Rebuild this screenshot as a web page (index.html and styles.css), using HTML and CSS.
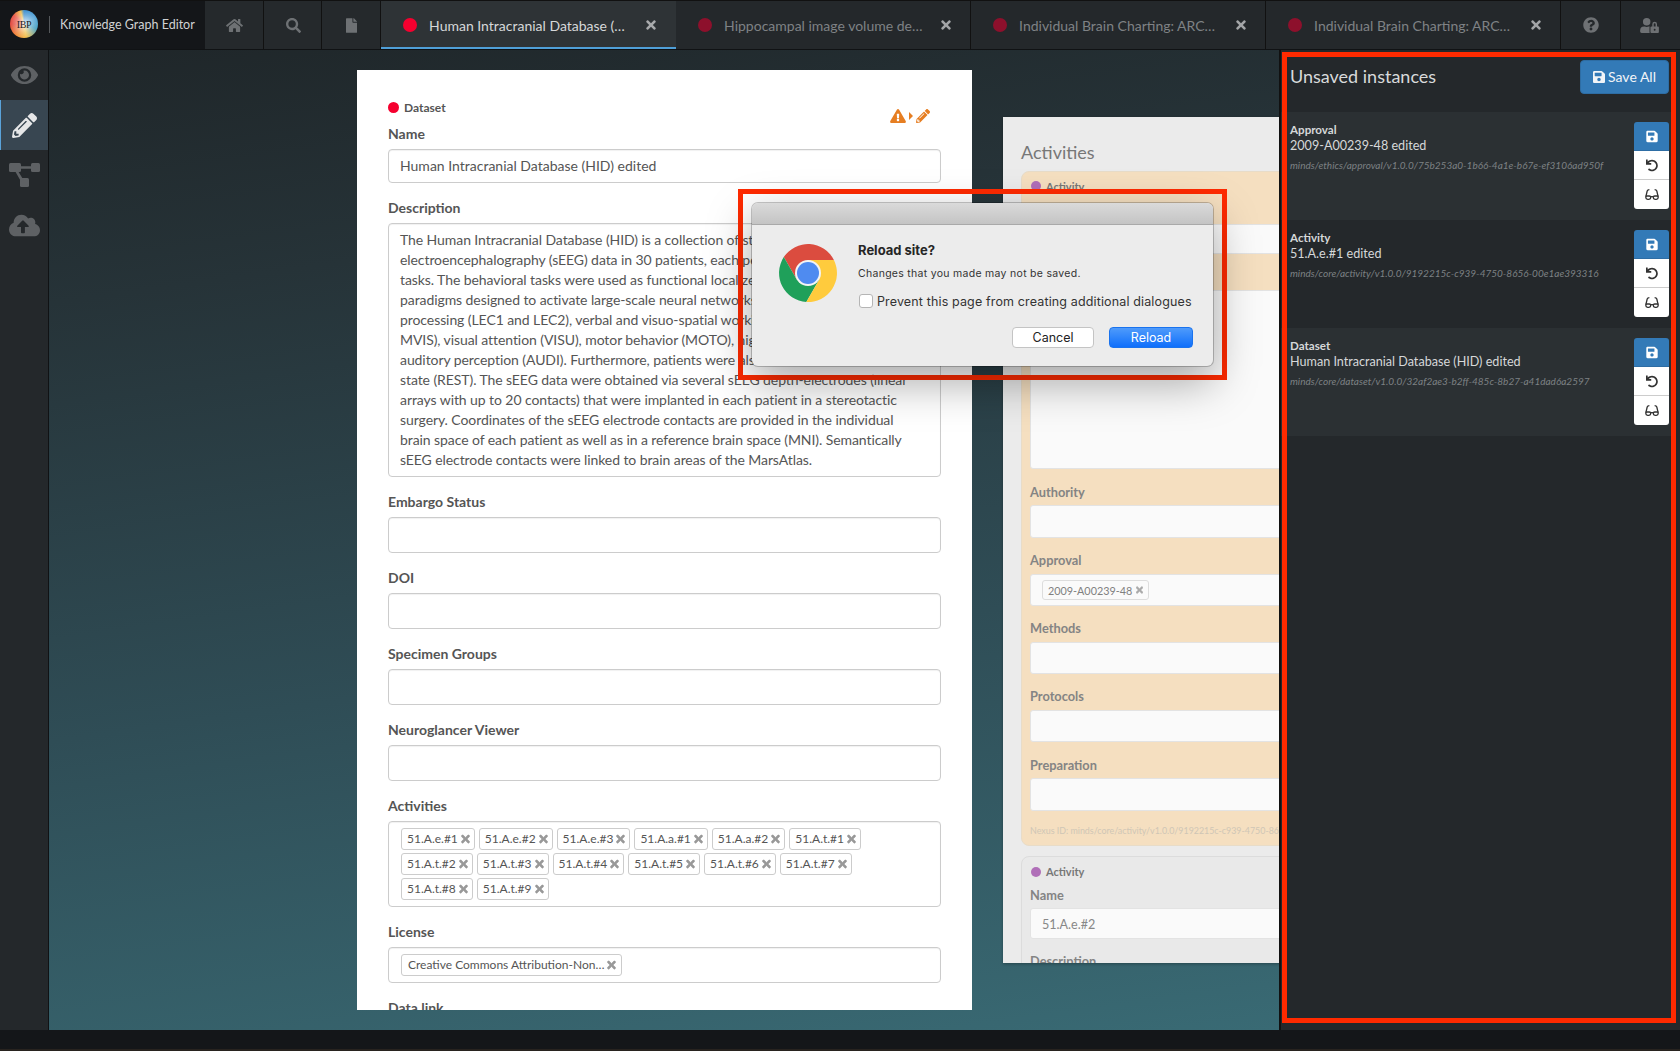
FILE: index.html
```html
<!DOCTYPE html>
<html lang="en">
<head>
<meta charset="utf-8">
<title>Knowledge Graph Editor</title>
<link rel="stylesheet" href="styles.css">
</head>
<body>
<svg class="sprite" aria-hidden="true">
  <symbol id="i-home" viewBox="0 0 576 512"><path d="M280.37 148.26L96 300.11V464a16 16 0 0 0 16 16l112.06-.29a16 16 0 0 0 15.92-16V368a16 16 0 0 1 16-16h64a16 16 0 0 1 16 16v95.64a16 16 0 0 0 16 16.05L464 480a16 16 0 0 0 16-16V300L295.67 148.26a12.19 12.19 0 0 0-15.3 0zM571.6 251.47L488 182.56V44.05a12 12 0 0 0-12-12h-56a12 12 0 0 0-12 12v72.61L318.47 43a48 48 0 0 0-61 0L4.34 251.47a12 12 0 0 0-1.6 16.9l25.5 31A12 12 0 0 0 45.15 301l235.22-193.74a12.19 12.19 0 0 1 15.3 0L530.9 301a12 12 0 0 0 16.9-1.6l25.5-31a12 12 0 0 0-1.7-16.93z"/></symbol>
  <symbol id="i-search" viewBox="0 0 512 512"><path d="M505 442.7L405.3 343c-4.5-4.5-10.6-7-17-7H372c27.6-35.3 44-79.7 44-128C416 93.1 322.9 0 208 0S0 93.1 0 208s93.1 208 208 208c48.3 0 92.7-16.4 128-44v16.3c0 6.4 2.5 12.5 7 17l99.7 99.7c9.4 9.4 24.6 9.4 33.9 0l28.3-28.3c9.4-9.4 9.4-24.6.1-34zM208 336c-70.7 0-128-57.2-128-128 0-70.7 57.2-128 128-128 70.7 0 128 57.2 128 128 0 70.7-57.2 128-128 128z"/></symbol>
  <symbol id="i-file" viewBox="0 0 384 512"><path d="M224 136V0H24C10.7 0 0 10.7 0 24v464c0 13.3 10.7 24 24 24h336c13.3 0 24-10.7 24-24V160H248c-13.2 0-24-10.8-24-24zm160-14.1v6.1H256V0h6.1c6.4 0 12.5 2.5 17 7l97.9 98c4.5 4.5 7 10.6 7 16.9z"/></symbol>
  <symbol id="i-times" viewBox="0 0 352 512"><path d="M242.72 256l100.07-100.07c12.28-12.28 12.28-32.19 0-44.48l-22.24-22.24c-12.28-12.28-32.19-12.28-44.48 0L176 189.28 75.93 89.21c-12.28-12.28-32.19-12.28-44.48 0L9.21 111.45c-12.28 12.28-12.28 32.19 0 44.48L109.28 256 9.21 356.07c-12.28 12.28-12.28 32.19 0 44.48l22.24 22.24c12.28 12.28 32.2 12.28 44.48 0L176 322.72l100.07 100.07c12.28 12.28 32.2 12.28 44.48 0l22.24-22.24c12.28-12.28 12.28-32.19 0-44.48L242.72 256z"/></symbol>
  <symbol id="i-help" viewBox="0 0 512 512"><path d="M504 256c0 136.997-111.043 248-248 248S8 392.997 8 256C8 119.083 119.043 8 256 8s248 111.083 248 248zM262.655 90c-54.497 0-89.255 22.957-116.549 63.758-3.536 5.286-2.353 12.415 2.715 16.258l34.699 26.31c5.205 3.947 12.621 3.008 16.665-2.122 17.864-22.658 30.113-35.797 57.303-35.797 20.429 0 45.698 13.148 45.698 32.958 0 14.976-12.363 22.667-32.534 33.976C247.128 238.528 216 254.941 216 296v4c0 6.627 5.373 12 12 12h56c6.627 0 12-5.373 12-12v-1.333c0-28.462 83.186-29.647 83.186-106.667 0-58.002-60.165-102-116.531-102zM256 338c-25.365 0-46 20.635-46 46 0 25.364 20.635 46 46 46s46-20.636 46-46c0-25.365-20.635-46-46-46z"/></symbol>
  <symbol id="i-user-lock" viewBox="0 0 640 512"><path d="M224 256A128 128 0 1 0 96 128a128 128 0 0 0 128 128zm96 64a63.08 63.08 0 0 1 8.1-30.5c-4.8-.5-9.5-1.5-14.5-1.5h-16.7a174.08 174.08 0 0 1-145.8 0h-16.7A134.43 134.43 0 0 0 0 422.4V464a48 48 0 0 0 48 48h280.9a63.54 63.54 0 0 1-8.9-32zm288-32h-32v-80a80 80 0 0 0-160 0v80h-32a32 32 0 0 0-32 32v160a32 32 0 0 0 32 32h224a32 32 0 0 0 32-32V320a32 32 0 0 0-32-32zM496 432a32 32 0 1 1 32-32 32 32 0 0 1-32 32zm32-144h-64v-80a32 32 0 0 1 64 0z"/></symbol>
  <symbol id="i-eye" viewBox="0 0 576 512"><path d="M572.52 241.4C518.29 135.59 410.93 64 288 64S57.68 135.64 3.48 241.41a32.35 32.35 0 0 0 0 29.19C57.71 376.41 165.07 448 288 448s230.32-71.64 284.52-177.41a32.35 32.35 0 0 0 0-29.19zM288 400a144 144 0 1 1 144-144 143.93 143.93 0 0 1-144 144zm0-240a95.31 95.31 0 0 0-25.31 3.79 47.85 47.85 0 0 1-66.9 66.9A95.78 95.78 0 1 0 288 160z"/></symbol>
  <symbol id="i-pencil" viewBox="0 0 512 512"><path d="M497.9 142.1l-46.1 46.1c-4.7 4.7-12.3 4.7-17 0l-111-111c-4.7-4.7-4.7-12.3 0-17l46.1-46.1c18.7-18.7 49.1-18.7 67.9 0l60.1 60.1c18.8 18.7 18.8 49.1 0 67.9zM284.2 99.8L21.6 362.4.4 483.9c-2.9 16.4 11.4 30.6 27.8 27.8l121.5-21.3 262.6-262.6c4.7-4.7 4.7-12.3 0-17l-111-111c-4.8-4.7-12.4-4.7-17.1 0zM124.1 339.9c-5.5-5.5-5.5-14.3 0-19.8l154-154c5.5-5.5 14.3-5.5 19.8 0s5.5 14.3 0 19.8l-154 154c-5.5 5.5-14.3 5.5-19.8 0zM88 424h48v36.3l-64.5 11.3-31.1-31.1L51.7 376H88v48z"/></symbol>
  <symbol id="i-tree" viewBox="0 0 31 24"><rect x="0" y="0" width="12" height="9" rx="1.5"/><rect x="22" y="0" width="9" height="9" rx="1.5"/><rect x="11" y="15" width="9" height="9" rx="1.5"/><path d="M11 3.2h12v2.6H11zM6 8h3l5.5 9-2.5 1.5z"/></symbol>
  <symbol id="i-cloud" viewBox="0 0 640 512"><path d="M537.6 226.6c4.1-10.7 6.4-22.4 6.4-34.6 0-53-43-96-96-96-19.7 0-38.1 6-53.3 16.2C367 64.2 315.3 32 256 32c-88.4 0-160 71.6-160 160 0 2.7.1 5.4.2 8.1C40.2 219.8 0 273.2 0 336c0 79.5 64.5 144 144 144h368c70.7 0 128-57.3 128-128 0-61.9-44-113.6-102.4-125.4zM393.4 288H328v112c0 8.8-7.2 16-16 16h-48c-8.8 0-16-7.2-16-16V288h-65.4c-14.3 0-21.4-17.2-11.3-27.3l105.4-105.4c6.2-6.2 16.4-6.2 22.6 0l105.4 105.4c10.1 10.1 2.9 27.3-11.3 27.3z"/></symbol>
  <symbol id="i-save" viewBox="0 0 448 512"><path d="M433.941 129.941l-83.882-83.882A48 48 0 0 0 316.118 32H48C21.49 32 0 53.49 0 80v352c0 26.51 21.49 48 48 48h352c26.51 0 48-21.49 48-48V163.882a48 48 0 0 0-14.059-33.941zM224 416c-35.346 0-64-28.654-64-64 0-35.346 28.654-64 64-64s64 28.654 64 64c0 35.346-28.654 64-64 64zm96-304.52V212c0 6.627-5.373 12-12 12H76c-6.627 0-12-5.373-12-12V108c0-6.627 5.373-12 12-12h228.52c3.183 0 6.235 1.264 8.485 3.515l3.48 3.48A11.996 11.996 0 0 1 320 111.48z"/></symbol>
  <symbol id="i-undo" viewBox="0 0 512 512"><path d="M212.333 224.333H12c-6.627 0-12-5.373-12-12V12C0 5.373 5.373 0 12 0h48c6.627 0 12 5.373 12 12v78.112C117.773 39.279 184.26 7.47 258.175 8.007c136.906.994 246.448 111.623 246.157 248.532C504.041 393.258 393.12 504 256.333 504c-64.089 0-122.496-24.313-166.51-64.215-5.099-4.622-5.334-12.554-.467-17.42l33.967-33.967c4.474-4.474 11.662-4.717 16.401-.525C170.76 415.336 211.58 432 256.333 432c97.268 0 176-78.716 176-176 0-97.267-78.716-176-176-176-58.496 0-110.28 28.476-142.274 72.333h98.274c6.627 0 12 5.373 12 12v48c0 6.627-5.373 12-12 12z"/></symbol>
  <symbol id="i-glasses" viewBox="0 0 16 14"><g fill="none" stroke="currentColor" stroke-width="1.500"><path d="M1 9.500q0-.8 1-.8h3q1.500 0 1.500 1.300v.8q0 1.700-2 1.700h-1.500q-2 0-2-1.700zM15 9.500q0-.8-1-.8h-3q-1.500 0-1.500 1.300v.8q0 1.700 2 1.700h1.500q2 0 2-1.700z"/><path d="M6.500 9.500h3M1 9.500l1.500-6.500Q3 1.500 5 1.500M15 9.500l-1.500-6.500Q13 1.500 11 1.500"/></g></symbol>
  <symbol id="i-warn" viewBox="0 0 576 512"><path d="M569.517 440.013C587.975 472.007 564.806 512 527.94 512H48.054c-36.937 0-59.999-40.055-41.577-71.987L246.423 24.035c18.467-32.009 64.72-31.951 83.154 0l239.94 416.978zM288 354c-25.405 0-46 20.595-46 46s20.595 46 46 46 46-20.595 46-46-20.595-46-46-46zm-43.673-165.346l7.418 136c.347 6.364 5.609 11.346 11.982 11.346h48.546c6.373 0 11.635-4.982 11.982-11.346l7.418-136c.375-6.874-5.098-12.654-11.982-12.654h-63.383c-6.884 0-12.356 5.78-11.981 12.654z"/></symbol>
</svg>

<div class="app">
  <header class="topbar">
    <div class="brand">
      <div class="logo">IBP</div>
      <span class="brand-sep"></span>
      <span class="brand-name">Knowledge Graph Editor</span>
    </div>
    <div class="tab-icon"><svg class="ico ico-home"><use href="#i-home"/></svg></div>
    <div class="tab-icon"><svg class="ico ico-search"><use href="#i-search"/></svg></div>
    <div class="tab-icon"><svg class="ico ico-file"><use href="#i-file"/></svg></div>
    <div class="tab tab-active">
      <span class="tab-dot dot-active"></span>
      <span class="tab-text">Human Intracranial Database (…</span>
      <svg class="ico ico-close"><use href="#i-times"/></svg>
    </div>
    <div class="tab">
      <span class="tab-dot"></span>
      <span class="tab-text">Hippocampal image volume de…</span>
      <svg class="ico ico-close"><use href="#i-times"/></svg>
    </div>
    <div class="tab">
      <span class="tab-dot"></span>
      <span class="tab-text">Individual Brain Charting: ARC…</span>
      <svg class="ico ico-close"><use href="#i-times"/></svg>
    </div>
    <div class="tab">
      <span class="tab-dot"></span>
      <span class="tab-text">Individual Brain Charting: ARC…</span>
      <svg class="ico ico-close"><use href="#i-times"/></svg>
    </div>
    <div class="tab-icon tab-icon-end"><svg class="ico ico-help"><use href="#i-help"/></svg></div>
    <div class="tab-icon tab-icon-end"><svg class="ico ico-user"><use href="#i-user-lock"/></svg></div>
  </header>

  <div class="workspace">
    <nav class="sidebar">
      <div class="side-item"><svg class="ico ico-eye"><use href="#i-eye"/></svg></div>
      <div class="side-item side-active"><svg class="ico ico-pencil"><use href="#i-pencil"/></svg></div>
      <div class="side-item"><svg class="ico ico-tree"><use href="#i-tree"/></svg></div>
      <div class="side-item"><svg class="ico ico-cloud"><use href="#i-cloud"/></svg></div>
    </nav>

    <main class="stage">
      <section class="card">
        <div class="badge-edit">
          <svg class="ico ico-warn"><use href="#i-warn"/></svg>
          <span class="badge-arrow"></span>
          <svg class="ico ico-warn-pencil"><use href="#i-pencil"/></svg>
        </div>
        <div class="type-line"><span class="type-dot dot-dataset"></span><span class="type-name">Dataset</span></div>

        <div class="group">
          <label class="label">Name</label>
          <div class="input input-34">Human Intracranial Database (HID) edited</div>
        </div>
        <div class="group">
          <label class="label">Description</label>
          <div class="input input-area">The Human Intracranial Database (HID) is a collection of stereo-
electroencephalography (sEEG) data in 30 patients, each performing
tasks. The behavioral tasks were used as functional localizers or
paradigms designed to activate large-scale neural networks of
processing (LEC1 and LEC2), verbal and visuo-spatial working
MVIS), visual attention (VISU), motor behavior (MOTO), higher
auditory perception (AUDI). Furthermore, patients were also at rest
state (REST). The sEEG data were obtained via several sEEG depth-electrodes (linear
arrays with up to 20 contacts) that were implanted in each patient in a stereotactic
surgery. Coordinates of the sEEG electrode contacts are provided in the individual
brain space of each patient as well as in a reference brain space (MNI). Semantically
sEEG electrode contacts were linked to brain areas of the MarsAtlas.</div>
        </div>
        <div class="group"><label class="label">Embargo Status</label><div class="input"></div></div>
        <div class="group"><label class="label">DOI</label><div class="input"></div></div>
        <div class="group"><label class="label">Specimen Groups</label><div class="input"></div></div>
        <div class="group"><label class="label">Neuroglancer Viewer</label><div class="input"></div></div>
        <div class="group">
          <label class="label">Activities</label>
          <div class="input tags">
            <div class="tag-row">
              <span class="tag">51.A.e.#1<svg class="ico ico-x"><use href="#i-times"/></svg></span>
              <span class="tag">51.A.e.#2<svg class="ico ico-x"><use href="#i-times"/></svg></span>
              <span class="tag">51.A.e.#3<svg class="ico ico-x"><use href="#i-times"/></svg></span>
              <span class="tag">51.A.a.#1<svg class="ico ico-x"><use href="#i-times"/></svg></span>
              <span class="tag">51.A.a.#2<svg class="ico ico-x"><use href="#i-times"/></svg></span>
              <span class="tag">51.A.t.#1<svg class="ico ico-x"><use href="#i-times"/></svg></span>
            </div>
            <div class="tag-row">
              <span class="tag">51.A.t.#2<svg class="ico ico-x"><use href="#i-times"/></svg></span>
              <span class="tag">51.A.t.#3<svg class="ico ico-x"><use href="#i-times"/></svg></span>
              <span class="tag">51.A.t.#4<svg class="ico ico-x"><use href="#i-times"/></svg></span>
              <span class="tag">51.A.t.#5<svg class="ico ico-x"><use href="#i-times"/></svg></span>
              <span class="tag">51.A.t.#6<svg class="ico ico-x"><use href="#i-times"/></svg></span>
              <span class="tag">51.A.t.#7<svg class="ico ico-x"><use href="#i-times"/></svg></span>
            </div>
            <div class="tag-row">
              <span class="tag">51.A.t.#8<svg class="ico ico-x"><use href="#i-times"/></svg></span>
              <span class="tag">51.A.t.#9<svg class="ico ico-x"><use href="#i-times"/></svg></span>
            </div>
          </div>
        </div>
        <div class="group">
          <label class="label">License</label>
          <div class="input tags">
            <div class="tag-row">
              <span class="tag tag-license">Creative Commons Attribution-Non…<svg class="ico ico-x"><use href="#i-times"/></svg></span>
            </div>
          </div>
        </div>
        <div class="group"><label class="label">Data link</label><div class="input"></div></div>
      </section>

      <section class="card-back">
        <h2 class="back-title">Activities</h2>
        <div class="panel panel-current">
          <div class="back-type"><span class="back-dot"></span><span class="back-type-name">Activity</span></div>
          <div class="back-group"><label class="back-label">Name</label><div class="back-input back-input-name"></div></div>
          <div class="back-group"><label class="back-label">Description</label><div class="back-input back-area"></div></div>
          <div class="back-group"><label class="back-label">Authority</label><div class="back-input"></div></div>
          <div class="back-group"><label class="back-label">Approval</label><div class="back-input back-tags"><span class="back-tag">2009-A00239-48<svg class="ico ico-x-back"><use href="#i-times"/></svg></span></div></div>
          <div class="back-group"><label class="back-label">Methods</label><div class="back-input"></div></div>
          <div class="back-group"><label class="back-label">Protocols</label><div class="back-input"></div></div>
          <div class="back-group"><label class="back-label">Preparation</label><div class="back-input"></div></div>
          <div class="nexus">Nexus ID: minds/core/activity/v1.0.0/9192215c-c939-4750-8656-00e1ae393316</div>
        </div>
        <div class="panel panel-next">
          <div class="back-type"><span class="back-dot"></span><span class="back-type-name">Activity</span></div>
          <div class="back-group"><label class="back-label">Name</label><div class="back-input back-input-name back-filled">51.A.e.#2</div></div>
          <div class="back-group"><label class="back-label">Description</label><div class="back-input back-area"></div></div>
        </div>
      </section>
    </main>

    <aside class="unsaved">
      <div class="unsaved-head">
        <h2 class="unsaved-title">Unsaved instances</h2>
        <button class="save-all"><svg class="ico ico-saveall"><use href="#i-save"/></svg>Save All</button>
      </div>
      <div class="rows">
        <article class="row row-light">
          <div class="row-info">
            <div class="row-type">Approval</div>
            <div class="row-name">2009-A00239-48 edited</div>
            <div class="row-id">minds/ethics/approval/v1.0.0/75b253a0-1b66-4a1e-b67e-ef3106ad950f</div>
          </div>
          <div class="row-actions">
            <button class="act act-save"><svg class="ico ico-act"><use href="#i-save"/></svg></button>
            <button class="act"><svg class="ico ico-act"><use href="#i-undo"/></svg></button>
            <button class="act"><svg class="ico ico-glasses"><use href="#i-glasses"/></svg></button>
          </div>
        </article>
        <article class="row">
          <div class="row-info">
            <div class="row-type">Activity</div>
            <div class="row-name">51.A.e.#1 edited</div>
            <div class="row-id">minds/core/activity/v1.0.0/9192215c-c939-4750-8656-00e1ae393316</div>
          </div>
          <div class="row-actions">
            <button class="act act-save"><svg class="ico ico-act"><use href="#i-save"/></svg></button>
            <button class="act"><svg class="ico ico-act"><use href="#i-undo"/></svg></button>
            <button class="act"><svg class="ico ico-glasses"><use href="#i-glasses"/></svg></button>
          </div>
        </article>
        <article class="row row-light">
          <div class="row-info">
            <div class="row-type">Dataset</div>
            <div class="row-name">Human Intracranial Database (HID) edited</div>
            <div class="row-id">minds/core/dataset/v1.0.0/32af2ae3-b2ff-485c-8b27-a41dad6a2597</div>
          </div>
          <div class="row-actions">
            <button class="act act-save"><svg class="ico ico-act"><use href="#i-save"/></svg></button>
            <button class="act"><svg class="ico ico-act"><use href="#i-undo"/></svg></button>
            <button class="act"><svg class="ico ico-glasses"><use href="#i-glasses"/></svg></button>
          </div>
        </article>
      </div>
    </aside>
  </div>

  <footer class="statusbar"></footer>

  <div class="frame frame-panel"></div>
  <div class="frame frame-dialog"></div>

  <div class="dialog" role="dialog">
    <div class="dialog-bar"></div>
    <div class="dialog-body">
      <svg class="chrome" viewBox="-29 -29 58 58">
        <path fill="#db4c3f" d="M0-13H25.900A29 29 0 0 0-24.200-15.900L-11.260 6.500 0 0Z"/>
        <path fill="#1fa05a" d="M-11.260 6.500L-24.200-15.900A29 29 0 0 0-1.670 28.950L11.260 6.500 0 0Z"/>
        <path fill="#ffcb3d" d="M11.260 6.500L-1.670 28.950A29 29 0 0 0 25.900-13H0L0 0Z"/>
        <circle r="13" fill="#f4f4f4"/>
        <circle r="11" fill="#4f8bf0"/>
      </svg>
      <div class="dialog-main">
        <div class="dialog-title">Reload site?</div>
        <div class="dialog-sub">Changes that you made may not be saved.</div>
        <div class="dialog-check"><span class="checkbox"></span><span>Prevent this page from creating additional dialogues</span></div>
        <div class="dialog-buttons">
          <button class="mac-btn mac-cancel">Cancel</button>
          <button class="mac-btn mac-primary">Reload</button>
        </div>
      </div>
    </div>
  </div>
</div>
</body>
</html>
```

FILE: styles.css
```css
* { box-sizing: border-box; }
html, body { margin: 0; height: 100%; overflow: hidden; background: #141619; }
body { font-family: "Lato", "Open Sans", sans-serif; font-size: 14px; color: #555; }
.sprite { position: absolute; width: 0; height: 0; }
.ico { display: block; fill: currentColor; flex: none; }
button { font-family: inherit; }

.app { position: relative; display: flex; flex-direction: column; width: 1680px; height: 1051px; }

/* top bar */
.topbar { display: flex; height: 50px; flex: none; background: #141619; border-top: 1px solid #111; border-bottom: 1px solid #101214; }
.brand { display: flex; align-items: center; width: 205px; flex: none; padding-left: 10px; margin-top: -2px; }
.logo { width: 28px; height: 28px; flex: none; border-radius: 50%; display: flex; align-items: center; justify-content: center;
  font-family: "Liberation Serif", serif; font-size: 10px; letter-spacing: -.3px; color: #222;
  background: radial-gradient(circle at 50% 50%, rgba(255,255,255,.85) 0, rgba(255,255,255,.25) 45%, rgba(255,255,255,0) 70%),
    conic-gradient(from 0deg, #3f8fcf 0deg, #5aa7d8 60deg, #4aa3c4 110deg, #f2c14e 170deg, #f08a3c 215deg, #e2493f 270deg, #e8584a 310deg, #f2c14e 345deg, #3f8fcf 360deg); }
.brand-sep { width: 1px; height: 17px; flex: none; background: #55585b; margin-left: 11px; }
.brand-name { margin-left: 10px; color: #d0d2d3; font-size: 12.500px; white-space: nowrap; }

.tab-icon { display: flex; align-items: center; justify-content: center; width: 58.700px; background: #25292c; border-right: 1px solid #111; color: #6e7174; flex: none; }
.tab-icon-end { width: 60px; background: #24282b; }
.tab-icon-end:last-child { border-right: 0; flex: 1; }
.ico-home { width: 17px; height: 15px; margin-left: 2px; }
.ico-search { width: 15px; height: 15px; margin-left: 1px; }
.ico-file { width: 11px; height: 15px; }
.ico-help { width: 16px; height: 16px; }
.ico-user { width: 19px; height: 15px; margin-right: 2px; }

.tab { display: flex; align-items: center; width: 295px; padding-left: 22px; background: #24282b; border-right: 1px solid #111; color: #7f8285; flex: none; }
.tab-active { background: #2e3336; color: #d6d8d9; border-right: 0; box-shadow: inset 0 -2px 0 #4f9fd8; }
.tab-dot { width: 14px; height: 14px; border-radius: 50%; background: #8d102c; flex: none; }
.dot-active { background: #f5002f; }
.tab-text { width: 208px; margin-left: 12px; font-size: 14px; white-space: nowrap; }
.ico-close { width: 10px; height: 14px; margin-left: 9px; color: #a3a5a7; }
.tab-active .ico-close { color: #a8aaac; }

/* workspace */
.workspace { display: flex; flex: 1; min-height: 0; }
.sidebar { width: 49px; flex: none; background: #24282b; border-right: 1px solid #101214; color: #5e6164; }
.side-item { display: flex; align-items: center; justify-content: center; height: 50px; }
.side-active { background: #384651; border-left: 1px solid #5aa3da; color: #e6e7e8; }
.ico-eye { width: 27px; height: 24px; }
.ico-pencil { width: 25px; height: 25px; }
.ico-tree { width: 31px; height: 24px; }
.ico-cloud { width: 31px; height: 25px; }

.stage { flex: 1; min-width: 0; display: flex; align-items: flex-start; overflow: hidden; padding: 20px 0 0 308px;
  background: linear-gradient(172deg, #1f2629 0%, #263338 22%, #2f4d56 60%, #396a74 100%); }

/* main card */
.card { position: relative; width: 615px; height: 940px; flex: none; overflow: hidden; background: #fff; padding: 27px 31px 0; }
.type-line { display: flex; align-items: center; height: 20px; margin-bottom: 7px; }
.type-dot { width: 11px; height: 11px; border-radius: 50%; margin-right: 5px; }
.dot-dataset { background: #f5002f; }
.type-name { font-size: 12px; font-weight: 700; color: #555; }
.badge-edit { position: absolute; top: 39px; right: 42px; display: flex; align-items: center; color: #e67e22; }
.ico-warn { width: 16px; height: 14px; }
.badge-arrow { width: 0; height: 0; margin: 0 3px 0 3px; border-left: 4px solid #e67e22; border-top: 4px solid transparent; border-bottom: 4px solid transparent; }
.ico-warn-pencil { width: 14px; height: 14px; }

.group { margin-bottom: 15px; }
.label { display: block; height: 20px; line-height: 20px; margin-bottom: 5px; font-size: 14px; font-weight: 700; color: #555; }
.input { min-height: 36px; padding: 6px 11px; border: 1px solid #ccc; border-radius: 4px; background: #fff; color: #555; font-size: 14px; line-height: 20px; box-shadow: inset 0 1px 1px rgba(0,0,0,.06); }
.input-34 { min-height: 34px; height: 34px; }
.input-area { height: 254px; white-space: pre; overflow: hidden; letter-spacing: -.08px; }
.tags { display: flex; flex-direction: column; gap: 3px; padding-left: 12px; }
.tag-row { display: flex; gap: 4px; }
.tag { display: flex; align-items: center; height: 22px; padding: 0 4px 0 5px; border: 1px solid #ccc; border-radius: 3px; font-size: 12px; color: #555; white-space: nowrap; }
.tag-license { padding-left: 6px; padding-right: 5px; }
.ico-x { width: 9px; height: 12px; margin-left: 3px; color: #999; stroke: currentColor; stroke-width: 25; }

/* card behind */
.card-back { width: 615px; height: 846px; flex: none; margin: 47px 0 0 31px; overflow: hidden; background: #ebebeb; padding: 24px 18px 0; box-shadow: 0 1px 3px rgba(0,0,0,.3); }
.back-title { margin: 0 0 8px; height: 22px; line-height: 22px; font-size: 18px; font-weight: 400; color: #777; }
.panel { border: 1px solid #dfdad2; border-radius: 8px; padding: 6px 8px 7px; }
.panel-current { background: #f5dfc0; border-color: #e8dcc8; }
.panel-next { background: #e9e9e9; border-color: #dcdcdc; margin-top: 10px; padding-top: 7px; }
.back-type { display: flex; align-items: center; height: 16px; margin-bottom: 7px; }
.panel-next .back-type { margin-bottom: 6px; }
.back-dot { width: 10px; height: 10px; margin: 0 5px 0 1px; border-radius: 50%; background: #b06fb8; }
.back-type-name { font-size: 11px; font-weight: 700; color: #777; }
.back-group { margin-bottom: 13.350px; }
.back-label { display: block; height: 18px; line-height: 18.500px; margin-bottom: 4.500px; font-size: 12.800px; font-weight: 700; color: #848484; }
.back-input { height: 32.400px; background: #fafafa; border: 1px solid #e3e3e3; border-radius: 3px; }
.back-input-name { height: 30.600px; }
.back-area { height: 179.500px; }
.back-filled { padding: 0 11px; line-height: 31px; font-size: 12.600px; color: #888; }
.back-tags { padding: 5.500px 11px; }
.back-tag { display: inline-flex; align-items: center; height: 20px; padding: 0 5px; border: 1px solid #ddd; border-radius: 3px; font-size: 10.800px; color: #808080; white-space: nowrap; vertical-align: top; }
.ico-x-back { width: 7px; height: 10px; margin-left: 4px; color: #aaa; stroke: currentColor; stroke-width: 25; }
.nexus { height: 14px; line-height: 14px; margin-top: .300px; font-size: 8.900px; color: #cfc6b6; white-space: nowrap; }

/* unsaved panel */
.unsaved { width: 401px; flex: none; background: #24282b; border-left: 2px solid #111; padding-top: 10px; }
.unsaved-head { display: flex; align-items: center; justify-content: space-between; height: 34px; padding: 0 11px 0 9px; }
.unsaved-title { margin: -2px 0 0; font-size: 18px; font-weight: 400; color: #d8dadb; }
.save-all { display: flex; align-items: center; justify-content: center; width: 89px; height: 34px; padding: 0 0 1px; border: 1px solid #2e6da4; border-radius: 4px; background: #337ab7; color: #f1f4f7; font-size: 14px; }
.ico-saveall { width: 12px; height: 14px; margin-right: 3px; }
.rows { margin-top: 18px; margin-right: 9px; }
.row { display: flex; height: 108px; padding: 10px 2px 0 9px; background: #24282b; }
.row-light { background: #2b3033; }
.row-info { flex: 1; min-width: 0; padding-top: 1px; }
.row-type { height: 14px; line-height: 14px; font-size: 11.600px; font-weight: 700; color: #d6d8d9; }
.row-name { height: 16px; line-height: 18px; font-size: 12.600px; color: #d6d8d9; }
.row-id { height: 14px; line-height: 14px; margin-top: 5px; font-size: 10px; font-style: italic; color: #7d8184; white-space: nowrap; }
.row-actions { width: 35px; height: 87px; flex: none; display: flex; flex-direction: column; border-radius: 3px; overflow: hidden; }
.act { display: flex; align-items: center; justify-content: center; height: 29px; padding: 0; border: 0; border-bottom: 1px solid #ccc; background: #fff; color: #333; }
.act:last-child { border-bottom: 0; }
.act-save { background: #337ab7; color: #fff; border-bottom-color: #2e6da4; }
.ico-act { width: 12px; height: 13px; }
.ico-glasses { width: 14px; height: 13px; }

.statusbar { height: 21px; flex: none; background: #141619; border-bottom: 2px solid #28231f; }

/* annotations lying over the page */
.frame { position: absolute; border: 5px solid #ff2a00; pointer-events: none; }
.frame-panel { left: 1282px; top: 52px; width: 394px; height: 971px; }
.frame-dialog { left: 738px; top: 189px; width: 489px; height: 191px; z-index: 1; }

/* browser dialog */
.dialog { position: absolute; z-index: 2; left: 752px; top: 203px; width: 461px; height: 163px; border-radius: 6px; overflow: hidden; background: #ececec;
  font-family: "Inter", "Liberation Sans", sans-serif; color: #262626; box-shadow: 0 0 0 1px rgba(0,0,0,.22), 0 16px 45px rgba(0,0,0,.35); }
.dialog-bar { height: 22px; background: linear-gradient(#dadada, #c4c4c4); border-bottom: 1px solid #a9a9a9; }
.dialog-body { display: flex; padding: 19px 20px 0 27px; }
.chrome { width: 58px; height: 58px; flex: none; margin-right: 22px; }
.dialog-main { flex: 1; min-width: 0; }
.dialog-title { height: 14px; line-height: 14px; margin: -1px 0 0 -1px; font-size: 13px; font-weight: 700; color: #262626; }
.dialog-sub { height: 14px; line-height: 14px; margin: 10px 0 0 -1px; font-size: 10.500px; letter-spacing: .29px; color: #333; }
.dialog-check { display: flex; align-items: center; height: 14px; margin-top: 13px; font-size: 12.500px; letter-spacing: .14px; color: #333; white-space: nowrap; }
.checkbox { width: 14px; height: 14px; margin-right: 4px; flex: none; background: #fff; border: 1px solid #b5b5b5; border-radius: 3px; }
.dialog-buttons { display: flex; justify-content: flex-end; gap: 15px; margin-top: 19px; }
.mac-btn { height: 21px; padding: 0; font-family: inherit; font-size: 12.500px; border-radius: 4px; }
.mac-cancel { width: 82px; border: 1px solid #c4c4c4; background: #fff; color: #222; }
.mac-primary { width: 84px; border: 1px solid #1a73ee; color: #fff; background: linear-gradient(#4f9bfb, #0f6ffb); }
```
